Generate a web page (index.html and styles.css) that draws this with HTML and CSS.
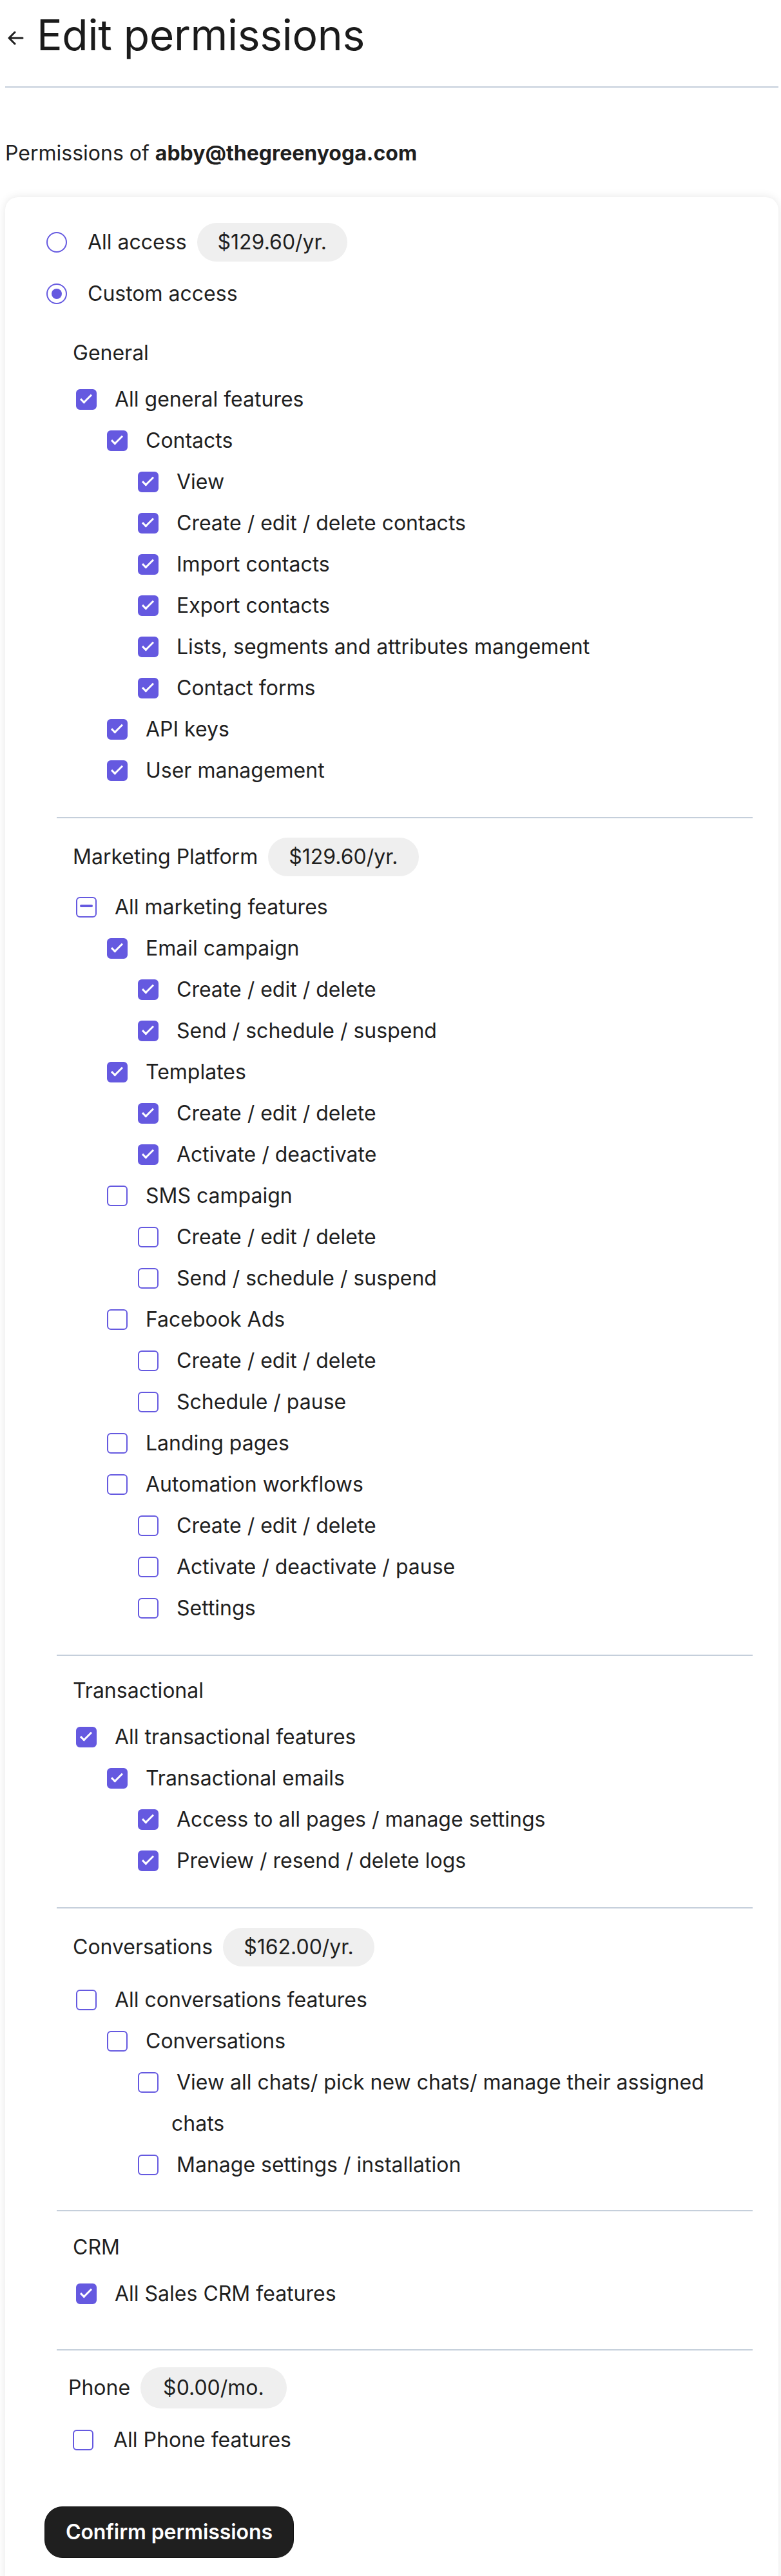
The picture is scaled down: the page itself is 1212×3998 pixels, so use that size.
FILE: index.html
```html
<!DOCTYPE html>
<html lang="en">
<head>
<meta charset="utf-8">
<title>Edit permissions</title>
<link rel="stylesheet" href="styles.css">
</head>
<body>
<div class="page">
  <header class="top">
    <svg class="back" viewBox="0 0 26 22" fill="none" stroke="currentColor" stroke-width="3" stroke-linecap="round" stroke-linejoin="round"><path d="M24 11H3M12 2L3 11l9 9"/></svg>
    <h1>Edit permissions</h1>
  </header>
  <div class="rule"></div>
  <p class="owner">Permissions of <b>abby@thegreenyoga.com</b></p>

  <div class="card">
    <div class="access">
      <div class="radio-row"><span class="radio"></span><span>All access</span><span class="pill">$129.60/yr.</span></div>
      <div class="radio-row"><span class="radio on"></span><span>Custom access</span></div>
    </div>

    <div class="sections">
      <div class="section">
        <div class="section-head">General</div>
        <div class="tree">
          <div class="opt"><span class="box on"></span><span class="txt">All general features</span></div>
          <div class="opt lvl-2"><span class="box on"></span><span class="txt">Contacts</span></div>
          <div class="opt lvl-3"><span class="box on"></span><span class="txt">View</span></div>
          <div class="opt lvl-3"><span class="box on"></span><span class="txt">Create / edit / delete contacts</span></div>
          <div class="opt lvl-3"><span class="box on"></span><span class="txt">Import contacts</span></div>
          <div class="opt lvl-3"><span class="box on"></span><span class="txt">Export contacts</span></div>
          <div class="opt lvl-3"><span class="box on"></span><span class="txt">Lists, segments and attributes mangement</span></div>
          <div class="opt lvl-3"><span class="box on"></span><span class="txt">Contact forms</span></div>
          <div class="opt lvl-2"><span class="box on"></span><span class="txt">API keys</span></div>
          <div class="opt lvl-2"><span class="box on"></span><span class="txt">User management</span></div>
        </div>
      </div>

      <div class="section">
        <div class="section-head">Marketing Platform<span class="pill">$129.60/yr.</span></div>
        <div class="tree">
          <div class="opt"><span class="box mixed"></span><span class="txt">All marketing features</span></div>
          <div class="opt lvl-2"><span class="box on"></span><span class="txt">Email campaign</span></div>
          <div class="opt lvl-3"><span class="box on"></span><span class="txt">Create / edit / delete</span></div>
          <div class="opt lvl-3"><span class="box on"></span><span class="txt">Send / schedule / suspend</span></div>
          <div class="opt lvl-2"><span class="box on"></span><span class="txt">Templates</span></div>
          <div class="opt lvl-3"><span class="box on"></span><span class="txt">Create / edit / delete</span></div>
          <div class="opt lvl-3"><span class="box on"></span><span class="txt">Activate / deactivate</span></div>
          <div class="opt lvl-2"><span class="box"></span><span class="txt">SMS campaign</span></div>
          <div class="opt lvl-3"><span class="box"></span><span class="txt">Create / edit / delete</span></div>
          <div class="opt lvl-3"><span class="box"></span><span class="txt">Send / schedule / suspend</span></div>
          <div class="opt lvl-2"><span class="box"></span><span class="txt">Facebook Ads</span></div>
          <div class="opt lvl-3"><span class="box"></span><span class="txt">Create / edit / delete</span></div>
          <div class="opt lvl-3"><span class="box"></span><span class="txt">Schedule / pause</span></div>
          <div class="opt lvl-2"><span class="box"></span><span class="txt">Landing pages</span></div>
          <div class="opt lvl-2"><span class="box"></span><span class="txt">Automation workflows</span></div>
          <div class="opt lvl-3"><span class="box"></span><span class="txt">Create / edit / delete</span></div>
          <div class="opt lvl-3"><span class="box"></span><span class="txt">Activate / deactivate / pause</span></div>
          <div class="opt lvl-3"><span class="box"></span><span class="txt">Settings</span></div>
        </div>
      </div>

      <div class="section">
        <div class="section-head">Transactional</div>
        <div class="tree">
          <div class="opt"><span class="box on"></span><span class="txt">All transactional features</span></div>
          <div class="opt lvl-2"><span class="box on"></span><span class="txt">Transactional emails</span></div>
          <div class="opt lvl-3"><span class="box on"></span><span class="txt">Access to all pages / manage settings</span></div>
          <div class="opt lvl-3"><span class="box on"></span><span class="txt">Preview / resend / delete logs</span></div>
        </div>
      </div>

      <div class="section convo">
        <div class="section-head">Conversations<span class="pill">$162.00/yr.</span></div>
        <div class="tree">
          <div class="opt"><span class="box"></span><span class="txt">All conversations features</span></div>
          <div class="opt lvl-2"><span class="box"></span><span class="txt">Conversations</span></div>
          <div class="opt lvl-3"><span class="box"></span><span class="txt">View all chats/ pick new chats/ manage their assigned chats</span></div>
          <div class="opt lvl-3"><span class="box"></span><span class="txt">Manage settings / installation</span></div>
        </div>
      </div>

      <div class="section crm">
        <div class="section-head">CRM</div>
        <div class="tree">
          <div class="opt"><span class="box on"></span><span class="txt">All Sales CRM features</span></div>
        </div>
      </div>

      <div class="section phone">
        <div class="section-head">Phone<span class="pill">$0.00/mo.</span></div>
        <div class="tree">
          <div class="opt"><span class="box"></span><span class="txt">All Phone features</span></div>
        </div>
      </div>
    </div>

    <button class="confirm" type="button">Confirm permissions</button>
  </div>
</div>
</body>
</html>
```

FILE: styles.css
```css
* {
  box-sizing: border-box;
}

body {
  margin: 0;
  background: #ffffff;
  color: #1f1f1f;
  font-family: Inter, "Noto Sans", "Liberation Sans", sans-serif;
}

.page {
  padding: 0 4px 0 8px;
}

/* Title row */
.top {
  display: flex;
  align-items: center;
  gap: 20px;
  height: 80px;
  margin-top: 14px;
  padding-left: 3px;
}

.back {
  flex: none;
  width: 26px;
  height: 22px;
  margin-top: 10px;
  color: #1f1f1f;
}

.top h1 {
  margin: 0;
  font-size: 66px;
  font-weight: 400;
  line-height: 80px;
  letter-spacing: -0.3px;
  color: #1b1b1b;
}

.rule {
  height: 2px;
  margin-top: 40px;
  background: #c5cfdb;
}

.owner {
  margin: 78px 0 0;
  font-size: 32px;
  line-height: 48px;
}

.owner b {
  font-weight: 700;
}

/* Card */
.card {
  margin-top: 44px;
  padding: 38px 40px 48px 61px;
  background: #ffffff;
  border-radius: 20px;
  box-shadow: 0 0 14px rgba(0, 0, 0, 0.1);
}

.access {
  display: flex;
  flex-direction: column;
  gap: 16px;
  padding-left: 3px;
}

.radio-row {
  display: flex;
  align-items: center;
  height: 64px;
  font-size: 32px;
  line-height: 64px;
}

.radio {
  flex: none;
  display: flex;
  align-items: center;
  justify-content: center;
  width: 32px;
  height: 32px;
  margin-right: 32px;
  border: 2px solid #6559e0;
  border-radius: 50%;
  background: #fff;
}

.radio.on::after {
  content: "";
  width: 16px;
  height: 16px;
  border-radius: 50%;
  background: #6559e0;
}

.pill {
  flex: none;
  margin-left: 16px;
  padding: 14px 32px;
  border-radius: 999px;
  background: #efefef;
  font-size: 32px;
  line-height: 32px;
}

/* Sections */
.sections {
  margin: 36px 0 0 19px;
}

.section {
  padding: 30px 16px 40px 25px;
  border-top: 2px solid #c5cfdb;
}

.section:first-child {
  padding-top: 0;
  border-top: 0;
}

.section-head {
  display: flex;
  align-items: center;
  min-height: 48px;
  font-size: 32px;
  line-height: 48px;
}

.tree {
  margin-top: 16px;
  padding-left: 5px;
}

.opt {
  display: flex;
  align-items: flex-start;
  font-size: 32px;
  line-height: 64px;
}

.lvl-2 {
  padding-left: 48px;
}

.lvl-3 {
  padding-left: 96px;
}

.txt {
  margin-left: 20px;
  text-indent: 8px;
}

/* Checkbox */
.box {
  position: relative;
  flex: none;
  width: 32px;
  height: 32px;
  margin-top: 16px;
  border: 2px solid #6559e0;
  border-radius: 6px;
  background: #ffffff;
}

.box.on {
  background: #6559e0;
}

.box.on::after {
  content: "";
  position: absolute;
  left: 9px;
  top: 2px;
  box-sizing: content-box;
  width: 6px;
  height: 15px;
  border: solid #ffffff;
  border-width: 0 3px 3px 0;
  transform: rotate(45deg);
}

.box.mixed::after {
  content: "";
  position: absolute;
  left: 4px;
  top: 10px;
  width: 20px;
  height: 4px;
  border-radius: 2px;
  background: #6559e0;
}

/* Section variants */
.convo {
  padding-bottom: 38px;
}

.convo .tree {
  margin-top: 20px;
}

.crm {
  padding-top: 32px;
  padding-bottom: 54px;
}

.phone {
  padding: 26px 16px 0 18px;
}

.phone .pill {
  padding: 16px 35px;
}

.phone .tree {
  margin-top: 17px;
  padding-left: 7px;
}

.phone .txt {
  margin-left: 23px;
}

/* Button */
.confirm {
  display: block;
  height: 80px;
  margin-top: 71px;
  padding: 0 32px;
  border: 1px solid #111;
  border-radius: 28px;
  background: #1f1f1f;
  color: #ffffff;
  font: 600 32px/1 Inter, "Noto Sans", "Liberation Sans", sans-serif;
  letter-spacing: -0.1px;
}
```
